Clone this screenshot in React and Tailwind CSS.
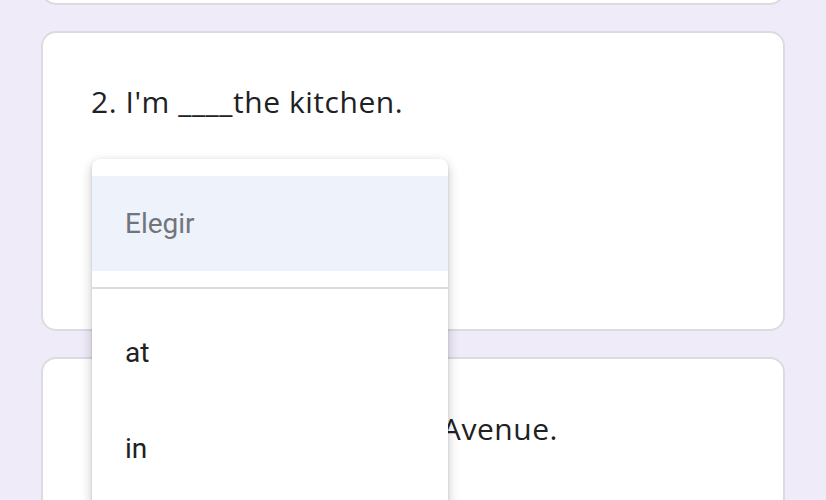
import React from "react";

export default function App() {
  return (
    <div className="relative h-[500px] w-[826px] overflow-hidden bg-[#f0ebf8]">
      <div className="mx-[41px] -mt-[40px] flex flex-col gap-[26px]">
        <div className="h-[45px] rounded-[15px] border-2 border-[#dadce0] bg-white" />
        <div className="h-[300px] rounded-[15px] border-2 border-[#dadce0] bg-white px-[48px] pt-[49px]">
          <div className="text-[30px] leading-[40px] tracking-[0.55px] text-[#202124]" style={{ fontFamily: "'Open Sans', sans-serif" }}>
            2. I'm ____the kitchen.
          </div>
        </div>
        <div className="h-[300px] rounded-[15px] border-2 border-[#dadce0] bg-white px-[48px] pt-[50px]">
          <div className="text-[30px] leading-[40px] tracking-[0.55px] text-[#202124] whitespace-nowrap" style={{ fontFamily: "'Open Sans', sans-serif" }}>
            3. She lives ____ on Fifth Avenue.
          </div>
        </div>
      </div>

      <div
        className="absolute left-[92px] top-[159px] w-[356px] h-[400px] rounded-[8px] bg-white pt-[17px] shadow-[0_4px_12px_rgba(0,0,0,0.22),0_1px_3px_rgba(0,0,0,0.12)]"
        style={{ fontFamily: "Roboto, sans-serif" }}
      >
        <div className="flex h-[95px] items-center bg-[#eef2fb] px-[33px] text-[28px] text-[#70757a]">Elegir</div>
        <div className="my-[16px] h-[2px] bg-[#dadce0]" />
        <div className="flex h-[96px] items-center px-[33px] text-[28px] text-[#202124]">at</div>
        <div className="flex h-[96px] items-center px-[33px] text-[28px] text-[#202124]">in</div>
      </div>
    </div>
  );
}
